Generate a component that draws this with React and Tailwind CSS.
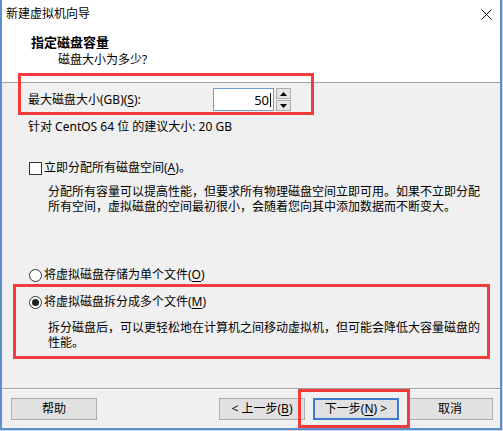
import React from "react";

const FONT = { fontFamily: '"Noto Sans","Noto Sans CJK SC",sans-serif' };

function U({ children }) {
  return <span className="underline underline-offset-2">{children}</span>;
}

function Btn({ children, def, className = "" }) {
  return (
    <div
      className={
        "h-[22px] w-[86px] flex items-center justify-center bg-[#e1e1e1] text-[12px] leading-[16px] text-black " +
        (def ? "border-2 border-[#3b7ad0] " : "border border-[#adadad] ") +
        className
      }
    >
      {children}
    </div>
  );
}

export default function App() {
  return (
    <div className="w-[503px] h-[431px] bg-[#cdd6e0] overflow-hidden" style={FONT}>
      <div className="relative w-[502px] h-[430px] flex flex-col border-l-2 border-r-2 border-b-2 border-[#5d8fcf] bg-[#f0f0f0] text-[12px] text-black">
        {/* title bar */}
        <div className="h-[27px] bg-white flex items-center justify-between pl-[4px] pr-[8px]">
          <span className="leading-[16px]">新建虚拟机向导</span>
          <svg width="11" height="11" viewBox="0 0 11 11" className="mt-[1px]">
            <path d="M0.5 0.5 L10.5 10.5 M10.5 0.5 L0.5 10.5" stroke="#111" strokeWidth="1" />
          </svg>
        </div>
        {/* header */}
        <div className="h-[56px] bg-white border-b border-[#a0a0a0] pt-[7px]">
          <div className="pl-[29px] text-[13px] font-bold leading-[16px]">指定磁盘容量</div>
          <div className="pl-[56px] mt-[2px] leading-[16px]">磁盘大小为多少?</div>
        </div>
        {/* body */}
        <div className="flex-1 flex flex-col">
          <div className="mt-[5px] pl-[26px] flex items-center h-[23px]">
            <div className="w-[185px] leading-[16px]">
              最大磁盘大小(GB)(<U>S</U>):
            </div>
            <div className="w-[61px] h-[23px] bg-white border border-[#6f9ad8] flex items-center justify-end pr-[2px] text-[13px] leading-[16px]">
              50<span className="inline-block w-[1px] h-[14px] bg-black ml-[1px]" />
            </div>
            <div className="ml-[2px] w-[15px] h-[23px] flex flex-col gap-[1px]">
              <div className="flex-1 bg-[#e6e6e6] border border-[#adadad] flex items-center justify-center">
                <svg width="7" height="4" viewBox="0 0 7 4"><path d="M0 4 L3.5 0 L7 4 Z" fill="#000" /></svg>
              </div>
              <div className="flex-1 bg-[#e6e6e6] border border-[#adadad] flex items-center justify-center">
                <svg width="7" height="4" viewBox="0 0 7 4"><path d="M0 0 L7 0 L3.5 4 Z" fill="#000" /></svg>
              </div>
            </div>
          </div>
          <div className="mt-[8px] pl-[26px] leading-[16px]">针对 CentOS 64 位 的建议大小: 20 GB</div>

          <div className="mt-[25px] pl-[27px] flex items-center h-[16px]">
            <div className="w-[13px] h-[13px] border border-[#333] bg-white" />
            <span className="ml-[2px] leading-[16px]">
              立即分配所有磁盘空间(<U>A</U>)。
            </span>
          </div>
          <div className="mt-[8px] pl-[46px] leading-[15px] whitespace-nowrap">
            分配所有容量可以提高性能，但要求所有物理磁盘空间立即可用。如果不立即分配
            <br />
            所有空间，虚拟磁盘的空间最初很小，会随着您向其中添加数据而不断变大。
          </div>

          <div className="mt-[53px] pl-[27px] flex items-center h-[16px]">
            <div className="w-[13px] h-[13px] rounded-full border border-[#333] bg-white" />
            <span className="ml-[2px] leading-[16px]">
              将虚拟磁盘存储为单个文件(<U>O</U>)
            </span>
          </div>
          <div className="mt-[11px] pl-[27px] flex items-center h-[16px]">
            <div className="w-[13px] h-[13px] rounded-full border border-[#333] bg-white flex items-center justify-center">
              <div className="w-[7px] h-[7px] rounded-full bg-[#222]" />
            </div>
            <span className="ml-[2px] leading-[16px]">
              将虚拟磁盘拆分成多个文件(<U>M</U>)
            </span>
          </div>
          <div className="mt-[10px] pl-[46px] leading-[15px] whitespace-nowrap">
            拆分磁盘后，可以更轻松地在计算机之间移动虚拟机，但可能会降低大容量磁盘的
            <br />
            性能。
          </div>

          <div className="flex-1" />
          <div className="border-t border-[#a0a0a0] border-b border-b-white" />
          <div className="pt-[8px] pb-[8px] pl-[9px] pr-[7px] flex items-center">
            <Btn>帮助</Btn>
            <div className="flex-1" />
            <Btn>&lt; 上一步(<U>B</U>)</Btn>
            <Btn def className="ml-[8px]">下一步(<U>N</U>) &gt;</Btn>
            <Btn className="ml-[8px]">取消</Btn>
          </div>
        </div>

        {/* red annotation boxes */}
        <div className="absolute left-[16px] top-[73px] w-[296px] h-[42px] border-[3px] border-[#f23b3b]" />
        <div className="absolute left-[11px] top-[284px] w-[477px] h-[75px] border-[3px] border-[#f23b3b]" />
        <div className="absolute left-[296px] top-[389px] w-[112px] h-[39px] border-[3px] border-[#f23b3b]" />
      </div>
    </div>
  );
}
